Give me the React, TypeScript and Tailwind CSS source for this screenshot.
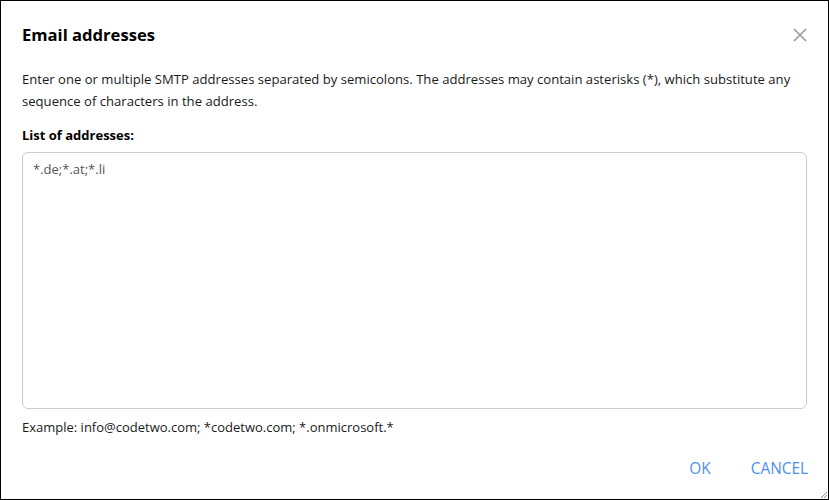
import React from "react";

export default function App() {
  return (
    <div
      className="w-[829px] h-[500px] bg-white border border-black flex flex-col relative text-[#1a1a1a]"
      style={{ fontFamily: '"Open Sans", "Noto Sans", sans-serif' }}
    >
      <div className="flex items-center justify-between pl-[21px] pr-[20px] pt-[22px]">
        <h1 className="text-[16.6px] font-bold leading-[24px] text-black">Email addresses</h1>
        <button className="w-[16px] h-[16px] flex items-center justify-center">
          <svg width="14" height="14" viewBox="0 0 14 14">
            <path d="M1 1L13 13M13 1L1 13" stroke="#999" strokeWidth="1.6" />
          </svg>
        </button>
      </div>
      <p className="px-[21px] mt-[21px] text-[13.1px] leading-[22px] pr-[30px]">
        Enter one or multiple SMTP addresses separated by semicolons. The addresses may contain asterisks (*), which substitute any sequence of characters in the address.
      </p>
      <div className="px-[21px] mt-[14px] text-[13px] font-bold leading-[18px] text-black">List of addresses:</div>
      <div className="mx-[21px] mt-[8px] h-[257px] border border-[#cccccc] rounded-[6px] px-[10px] py-[6px] text-[13px] leading-[20px] text-[#555]">
        *.de;*.at;*.li
      </div>
      <div className="px-[21px] mt-[8px] text-[13px] leading-[20px]">
        Example: info@codetwo.com; *codetwo.com; *.onmicrosoft.*
      </div>
      <div className="flex justify-end gap-[40px] pr-[20px] mt-[20px] text-[15.4px] text-[#4f8ff0]">
        <button>OK</button>
        <button>CANCEL</button>
      </div>
      <svg className="absolute right-0 bottom-0" width="10" height="10" viewBox="0 0 10 10">
        <path d="M9 3L3 9M9 6L6 9" stroke="#888" strokeWidth="1" />
      </svg>
    </div>
  );
}
